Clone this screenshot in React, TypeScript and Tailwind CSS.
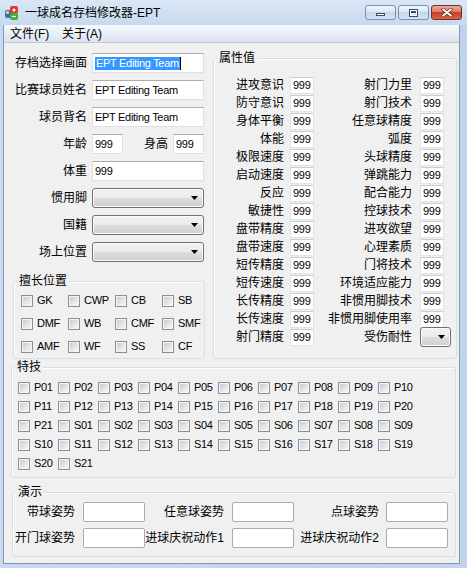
import React from "react";

const LEFT_ATTRS = ["进攻意识", "防守意识", "身体平衡", "体能", "极限速度", "启动速度", "反应", "敏捷性", "盘带精度", "盘带速度", "短传精度", "短传速度", "长传精度", "长传速度", "射门精度"];
const RIGHT_ATTRS = ["射门力里", "射门技术", "任意球精度", "弧度", "头球精度", "弹跳能力", "配合能力", "控球技术", "进攻欲望", "心理素质", "门将技术", "环境适应能力", "非惯用脚技术", "非惯用脚使用率", "受伤耐性"];
const POSITIONS = ["GK", "CWP", "CB", "SB", "DMF", "WB", "CMF", "SMF", "AMF", "WF", "SS", "CF"];

const SKILLS: string[] = [];
for (let i = 1; i <= 21; i++) SKILLS.push("P" + String(i).padStart(2, "0"));
for (let i = 1; i <= 21; i++) SKILLS.push("S" + String(i).padStart(2, "0"));

function AppIcon() {
  return (
    <svg width="16" height="16" viewBox="0 0 16 16">
      <rect x="1" y="5" width="8" height="8" rx="2" fill="#2f6fd6" />
      <rect x="6" y="1" width="8" height="8" rx="2" fill="#e23b2e" />
      <rect x="6" y="8" width="8" height="7" rx="2" fill="#3fae3a" />
      <rect x="2" y="6" width="3" height="3" rx="1" fill="#f2d23c" />
      <circle cx="10" cy="5" r="1.5" fill="#fff" />
      <path d="M8 11.5h4" stroke="#fff" strokeWidth="1.2" />
    </svg>
  );
}

function CaptionButtons() {
  return (
    <div className="flex gap-[2px] mt-[5px] mr-[5px]">
      <div className="w-[31px] h-[15px] rounded-[3px] border border-[#7d91ac] bg-[linear-gradient(to_bottom,#f1f6fc,#dbe6f3_45%,#c6d7ec_50%,#d4e2f2)] flex items-end justify-center pb-[3px]">
        <span className="w-[9px] h-[3px] bg-white border border-[#3b4b61]" />
      </div>
      <div className="w-[31px] h-[15px] rounded-[3px] border border-[#7d91ac] bg-[linear-gradient(to_bottom,#f1f6fc,#dbe6f3_45%,#c6d7ec_50%,#d4e2f2)] flex items-center justify-center">
        <span className="w-[9px] h-[8px] bg-white border border-[#3b4b61] p-[1px] flex">
          <span className="flex-1 border-t-2 border-[#3b4b61] bg-[#dfe6ef]" />
        </span>
      </div>
      <div className="w-[31px] h-[15px] rounded-[3px] border border-[#7a2e24] bg-[linear-gradient(to_bottom,#eeaa98,#dc7a62_45%,#c9402a_50%,#d8644a)] flex items-center justify-center">
        <svg width="12" height="9" viewBox="0 0 12 9">
          <path d="M2 1.2L10 7.8M10 1.2L2 7.8" stroke="#5a2018" strokeWidth="3.2" strokeLinecap="round" />
          <path d="M2 1.2L10 7.8M10 1.2L2 7.8" stroke="#fff" strokeWidth="1.8" strokeLinecap="round" />
        </svg>
      </div>
    </div>
  );
}

const LATIN = "text-[11px] leading-[13px] tracking-[-0.3px] font-['Liberation_Sans',sans-serif]";

function TextBox({ w, children, className = "" }: { w: string; children?: React.ReactNode; className?: string }) {
  return (
    <div className={`${w} h-[20px] shrink-0 bg-white border border-[#dbdfe6] border-t-[#abadb3] flex items-center pl-[2px] whitespace-nowrap overflow-hidden ${LATIN} ${className}`}>
      {children}
    </div>
  );
}

function SmallBox({ className = "" }: { className?: string }) {
  return (
    <div className={`w-[24px] h-[17px] shrink-0 bg-white border border-[#e1e3e8] border-t-[#c9ccd3] flex items-center pl-[2px] ${LATIN} ${className}`}>
      999
    </div>
  );
}

function Combo({ w, className = "" }: { w: string; className?: string }) {
  return (
    <div className={`${w} h-[20px] shrink-0 rounded-[3px] border border-[#707070] shadow-[inset_0_0_0_1px_#fcfcfc] bg-[linear-gradient(to_bottom,#f2f2f2,#ebebeb_50%,#dddddd_50%,#cfcfcf)] flex items-center justify-end pr-[5px] ${className}`}>
      <svg width="7" height="4" viewBox="0 0 7 4">
        <path d="M0 0H7L3.5 4Z" fill="#000" />
      </svg>
    </div>
  );
}

function Check({ label }: { label: string }) {
  return (
    <div className="flex items-center">
      <span className="w-[12px] h-[12px] shrink-0 border border-[#8e8f8f] bg-[#f4f4f4] p-[1px] flex">
        <span className="flex-1 bg-[linear-gradient(135deg,#c9cdd3,#f7f7f7)]" />
      </span>
      <span className={`ml-[4px] ${LATIN}`}>{label}</span>
    </div>
  );
}

function Legend({ children }: { children: React.ReactNode }) {
  return <legend className="ml-[3px] px-[2px] leading-[16px] bg-[#f0f0f0]">{children}</legend>;
}

function FormRow({ label, children }: { label: string; children: React.ReactNode }) {
  return (
    <div className="flex items-center h-[20px]">
      <span className="w-[83px] shrink-0 text-right leading-[20px] whitespace-nowrap">{label}</span>
      <div className="ml-[5px] flex items-center">{children}</div>
    </div>
  );
}

export default function App() {
  return (
    <div className="w-[467px] h-[568px] overflow-hidden flex flex-col bg-[#c2d5eb] text-[12px] text-black font-['Liberation_Sans','Noto_Sans_CJK_SC',sans-serif]">
      {/* title bar */}
      <div className="h-[25px] shrink-0 flex items-start bg-[linear-gradient(to_bottom,#dae6f4,#c7d9ee)]">
        <div className="mt-[5px] ml-[4px]">
          <AppIcon />
        </div>
        <span className="ml-[5px] mt-[5px] leading-[16px] whitespace-nowrap">一球成名存档修改器-EPT</span>
        <div className="ml-auto">
          <CaptionButtons />
        </div>
      </div>

      <div className="flex-1 flex pl-[3px] pr-[7px] pb-[4px] bg-[linear-gradient(to_right,#c8daee,#c0d3ea)]">
        <div className="flex-1 flex flex-col border-x border-b border-[#8397b3]">
          {/* menu bar */}
          <div className="h-[18px] shrink-0 flex items-center border-b border-[#c0cbd9] bg-[linear-gradient(to_bottom,#f7f9fd,#e6ecf5_60%,#dbe3ef)]">
            <span className="ml-[6px] w-[52px] leading-[16px]">文件(F)</span>
            <span className="leading-[16px]">关于(A)</span>
          </div>

          {/* client */}
          <div className="flex-1 bg-[#f0f0f0] flex flex-col">
            <div className="flex h-[316px] shrink-0">
              {/* left column */}
              <div className="w-[201px] shrink-0 pt-[10px] flex flex-col">
                <div className="flex flex-col gap-[7px]">
                  <FormRow label="存档选择画面">
                    <TextBox w="w-[112px]" className="pl-[1px]">
                      <span className="bg-[#3399ff] text-white px-[1px] leading-[13px]">EPT Editing Team</span>
                      <span className="w-px h-[13px] bg-black" />
                    </TextBox>
                  </FormRow>
                  <FormRow label="比赛球员姓名">
                    <TextBox w="w-[112px]">EPT Editing Team</TextBox>
                  </FormRow>
                  <FormRow label="球员背名">
                    <TextBox w="w-[112px]">EPT Editing Team</TextBox>
                  </FormRow>
                  <FormRow label="年龄">
                    <TextBox w="w-[31px]">999</TextBox>
                    <span className="ml-[21px] leading-[20px]">身高</span>
                    <TextBox w="w-[31px]" className="ml-[5px]">999</TextBox>
                  </FormRow>
                  <FormRow label="体重">
                    <TextBox w="w-[112px]">999</TextBox>
                  </FormRow>
                  <FormRow label="惯用脚">
                    <Combo w="w-[112px]" />
                  </FormRow>
                  <FormRow label="国籍">
                    <Combo w="w-[112px]" />
                  </FormRow>
                  <FormRow label="场上位置">
                    <Combo w="w-[112px]" />
                  </FormRow>
                </div>

                <fieldset className="mt-[11px] ml-[9px] w-[192px] h-[86px] border border-[#d5dfe5] rounded-[3px] shadow-[inset_1px_1px_0_#fff]">
                  <Legend>擅长位置</Legend>
                  <div className="pl-[7px] grid grid-cols-[47px_47px_47px_1fr] auto-rows-[23px] items-center">
                    {POSITIONS.map((p) => (
                      <Check key={p} label={p} />
                    ))}
                  </div>
                </fieldset>
              </div>

              {/* attributes */}
              <fieldset className="mt-[7px] ml-[8px] w-[244px] h-[309px] border border-[#d5dfe5] rounded-[3px] shadow-[inset_1px_1px_0_#fff]">
                <Legend>属性值</Legend>
                <div className="pt-[10px] pl-[10px] flex flex-col">
                  {LEFT_ATTRS.map((l, i) => (
                    <div key={l} className="flex items-center h-[18px]">
                      <span className="w-[60px] shrink-0 text-right leading-[18px] whitespace-nowrap">{l}</span>
                      <SmallBox className="ml-[6px]" />
                      <span className="w-[98px] shrink-0 text-right leading-[18px] whitespace-nowrap">{RIGHT_ATTRS[i]}</span>
                      {i === 14 ? <Combo w="w-[31px]" className="ml-[8px]" /> : <SmallBox className="ml-[8px]" />}
                    </div>
                  ))}
                </div>
              </fieldset>
            </div>

            {/* special skills */}
            <fieldset className="ml-[7px] w-[445px] h-[119px] border border-[#d5dfe5] rounded-[3px] shadow-[inset_1px_1px_0_#fff]">
              <Legend>特技</Legend>
              <div className="pt-[3px] pl-[6px] grid grid-cols-[repeat(10,40px)] auto-rows-[19px] items-center">
                {SKILLS.map((s) => (
                  <Check key={s} label={s} />
                ))}
              </div>
            </fieldset>

            {/* demo */}
            <fieldset className="mt-[6px] ml-[8px] w-[444px] h-[73px] border border-[#d5dfe5] rounded-[3px] shadow-[inset_1px_1px_0_#fff]">
              <Legend>演示</Legend>
              <div className="pt-[2px] flex flex-col gap-[6px]">
                {[
                  ["带球姿势", "任意球姿势", "点球姿势"],
                  ["开门球姿势", "进球庆祝动作1", "进球庆祝动作2"],
                ].map((row, r) => (
                  <div key={r} className="flex items-center h-[20px]">
                    <span className="w-[62px] shrink-0 text-right whitespace-nowrap leading-[20px]">{row[0]}</span>
                    <div className="ml-[8px] w-[62px] h-[20px] shrink-0 bg-white border border-[#acacac] rounded-[2px]" />
                    <span className="w-[79px] shrink-0 text-right whitespace-nowrap leading-[20px]">{row[1]}</span>
                    <div className="ml-[8px] w-[62px] h-[20px] shrink-0 bg-white border border-[#acacac] rounded-[2px]" />
                    <span className="w-[85px] shrink-0 text-right whitespace-nowrap leading-[20px]">{row[2]}</span>
                    <div className="ml-[7px] w-[62px] h-[20px] shrink-0 bg-white border border-[#acacac] rounded-[2px]" />
                  </div>
                ))}
              </div>
            </fieldset>
          </div>
        </div>
      </div>
    </div>
  );
}
